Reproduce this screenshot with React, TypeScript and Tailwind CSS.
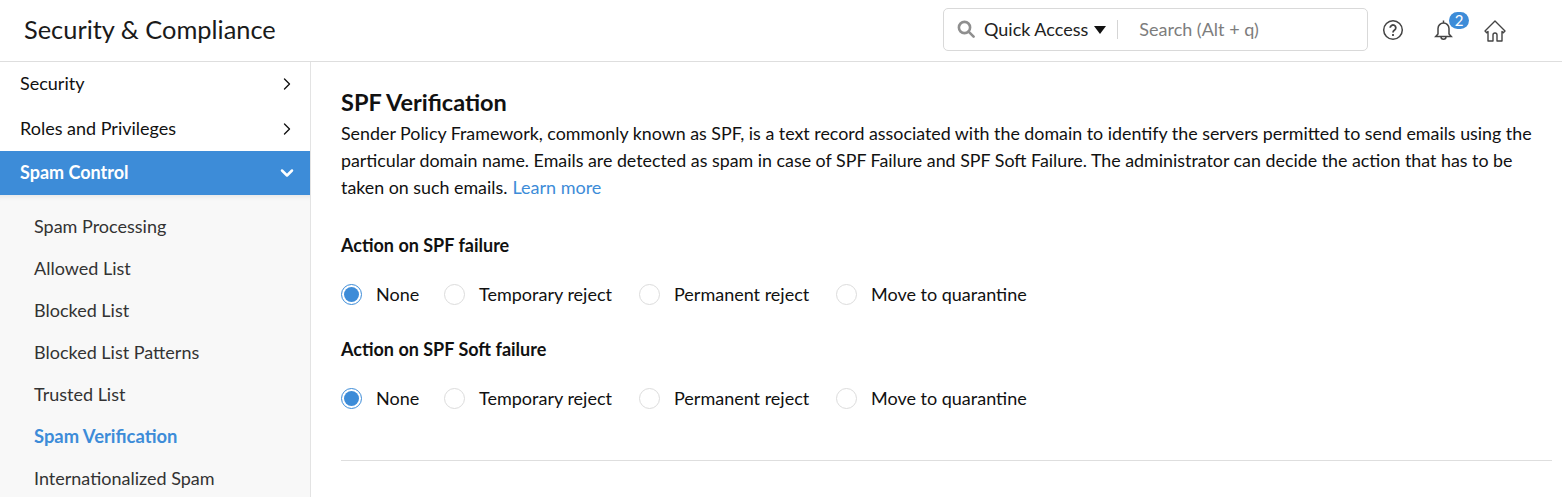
import { ChevronRight, ChevronDown } from 'lucide-react'

const menuItems = [
  'Spam Processing',
  'Allowed List',
  'Blocked List',
  'Blocked List Patterns',
  'Trusted List',
  'Spam Verification',
  'Internationalized Spam',
]

function Radio({ checked }: { checked?: boolean }) {
  return (
    <span
      className={`flex h-[21px] w-[21px] shrink-0 items-center justify-center rounded-full border bg-white ${
        checked ? 'border-[#3d8cd8]' : 'border-[#dcdcdc]'
      }`}
    >
      {checked && <span className="h-[15px] w-[15px] rounded-full bg-[#3d8cd8]" />}
    </span>
  )
}

function ActionGroup({ title }: { title: string }) {
  return (
    <div>
      <h3 className="text-[18px] leading-[24px] font-bold">{title}</h3>
      <div className="mt-[25px] flex h-[24px] items-center text-[18px]">
        <Radio checked />
        <span className="ml-[14px] w-[68px]">None</span>
        <Radio />
        <span className="ml-[14px] w-[160px]">Temporary reject</span>
        <Radio />
        <span className="ml-[14px] w-[162px]">Permanent reject</span>
        <Radio />
        <span className="ml-[14px]">Move to quarantine</span>
      </div>
    </div>
  )
}

export default function App() {
  return (
    <div className="flex h-[497px] w-[1562px] flex-col overflow-hidden bg-white font-['Lato',sans-serif] text-[18px] leading-[24px] text-[#111]">
      {/* Header */}
      <header className="flex h-[62px] shrink-0 items-center border-b border-[#dedede] pl-[24px]">
        <h1 className="mt-[-4px] text-[25.4px] leading-[30px] text-[#1a1a1a]">Security &amp; Compliance</h1>
        <div className="mt-[-3px] ml-auto flex h-[43px] w-[425px] items-center rounded-[5px] border border-[#d9d9d9] pl-[13px]">
          <svg width="18" height="18" viewBox="0 0 18 18" fill="none" stroke="#8f8f8f" strokeWidth="2.6">
            <circle cx="7.5" cy="7.5" r="5.6" />
            <path d="m11.6 11.6 5 5" strokeLinecap="round" />
          </svg>
          <span className="ml-[9px] text-[#222]">Quick Access</span>
          <svg className="mt-[2px] ml-[6px]" width="12" height="8" viewBox="0 0 12 8">
            <path d="M0 0h12L6 8z" fill="#111" />
          </svg>
          <span className="ml-[11px] h-[19px] w-px bg-[#d5d5d5]" />
          <span className="ml-[21px] text-[#7d7d7d]">Search (Alt + q)</span>
        </div>
        <div className="mt-[-1px] ml-[14px] flex items-center pr-[55px]">
          <svg width="22" height="22" viewBox="0 0 22 22" fill="none" stroke="#444" strokeWidth="1.5">
            <circle cx="11" cy="11" r="9.3" />
            <path d="M8.2 8.8a2.8 2.8 0 1 1 4.4 2.3c-1 .7-1.6 1.2-1.6 2.4" strokeWidth="1.8" />
            <path d="M11 15v2" strokeWidth="1.8" />
          </svg>
          <span className="relative ml-[28px] block h-[22px] w-[22px]">
            <svg width="22" height="22" viewBox="0 0 22 22" fill="none" stroke="#444" strokeWidth="1.5">
              <path d="M11.5 1.5v2.6M6 15V9.5a5.5 5.5 0 0 1 11 0V15l2.3 2.6H3.7z" />
              <path d="M9 17.8a2.5 2.5 0 0 0 5 0" />
            </svg>
            <span className="absolute top-[-7px] left-[17px] flex h-[17px] w-[20px] items-center justify-center rounded-full bg-[#3d8cd8] text-[15px] leading-none text-white">
              2
            </span>
          </span>
          <svg className="ml-[29px]" width="24" height="24" viewBox="0 0 24 24" fill="none" stroke="#444" strokeWidth="1.4">
            <path d="M12 3 2 13l1.7 1.7L5 13.4V23h5v-6a2 2 0 0 1 4 0v6h5v-9.6l1.3 1.3L22 13z" strokeLinejoin="round" />
          </svg>
        </div>
      </header>

      <div className="flex min-h-0 flex-1">
        {/* Sidebar */}
        <aside className="w-[311px] shrink-0 border-r border-[#e3e3e3]">
          <div className="flex h-[44px] items-center justify-between pr-[13px] pl-[20px]">
            <span className="mt-[-2px]">Security</span>
            <ChevronRight className="h-[20px] w-[20px]" strokeWidth={1.6} />
          </div>
          <div className="flex h-[45px] items-center justify-between pr-[13px] pl-[20px]">
            <span className="mt-[-2px]">Roles and Privileges</span>
            <ChevronRight className="h-[20px] w-[20px]" strokeWidth={1.6} />
          </div>
          <div className="flex h-[44px] items-center justify-between bg-[#3d8cd8] pr-[13px] pl-[20px] font-bold text-white">
            <span className="mt-[-2px]">Spam Control</span>
            <ChevronDown className="h-[20px] w-[20px]" strokeWidth={3} />
          </div>
          <ul className="h-[302px] bg-[#f8f8f8] pt-[10px] pl-[34px] shadow-[inset_0_6px_6px_-6px_rgba(0,0,0,0.12)]">
            {menuItems.map((item) => (
              <li
                key={item}
                className={`flex h-[42px] items-center ${
                  item === 'Spam Verification' ? 'text-[18.4px] font-bold text-[#3d8cd8]' : 'text-[#333]'
                }`}
              >
                {item}
              </li>
            ))}
          </ul>
        </aside>

        {/* Content */}
        <main className="min-w-0 flex-1 pt-[26px] pr-[10px] pl-[30px]">
          <h2 className="text-[23.5px] leading-[28px] font-bold">SPF Verification</h2>
          <p className="mt-[4px] text-[17.84px] leading-[27px] whitespace-nowrap">
            Sender Policy Framework, commonly known as SPF, is a text record associated with the domain to identify the servers permitted to send emails using the
            <br />
            particular domain name. Emails are detected as spam in case of SPF Failure and SPF Soft Failure. The administrator can decide the action that has to be
            <br />
            taken on such emails.
            <span className="ml-[5px] text-[18px] text-[#3d8cd8]">Learn more</span>
          </p>
          <div className="mt-[32px]">
            <ActionGroup title="Action on SPF failure" />
          </div>
          <div className="mt-[31px]">
            <ActionGroup title="Action on SPF Soft failure" />
          </div>
          <div className="mt-[50px] border-t border-[#dedede]" />
        </main>
      </div>
    </div>
  )
}
